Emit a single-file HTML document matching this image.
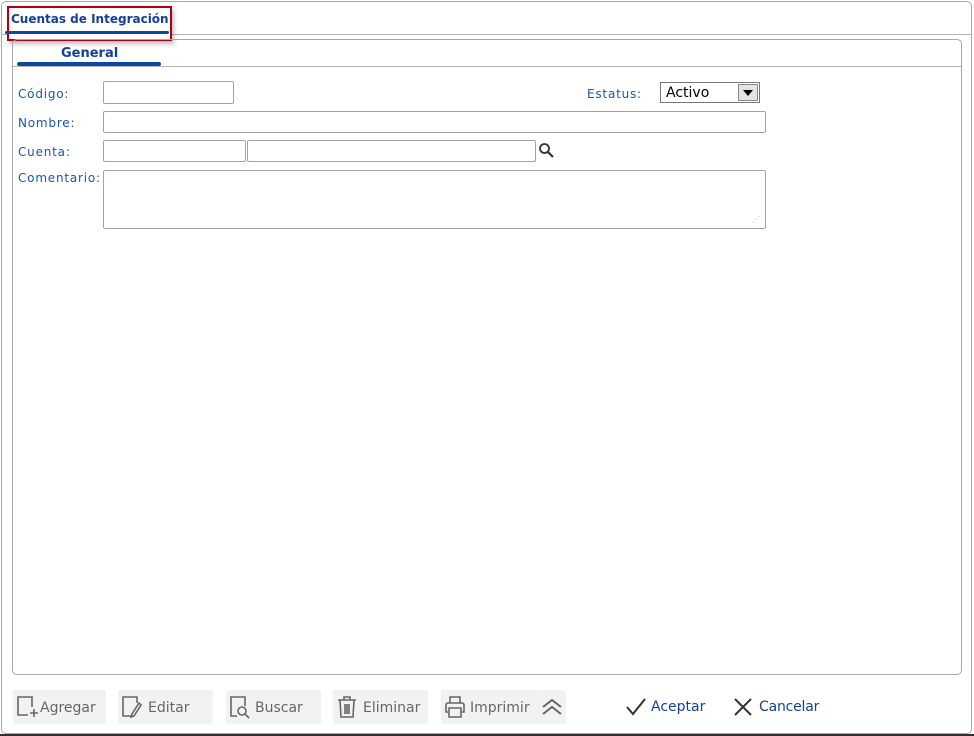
<!DOCTYPE html>
<html><head><meta charset="utf-8"><style>
*{box-sizing:border-box}
body{margin:0;width:974px;height:736px;background:#fff;font-family:"DejaVu Sans","Liberation Sans",sans-serif;position:relative;overflow:hidden}
.abs{position:absolute}
.frame{left:1px;top:1px;width:971px;height:733px;border:1px solid #a8a8a8;border-radius:5px}
.lbl{color:#1a56b0;font-size:12px;letter-spacing:0.8px}
.in{position:absolute;border:1px solid #a3a3a3;border-radius:2px;background:#fff}
.btn{position:absolute;top:690px;height:34px;background:#f2f2f2;border-radius:2px;color:#666;font-size:14px;line-height:36px}
.btn svg{position:absolute;left:2px;top:4px}
.btn span{position:absolute;left:27px}
</style></head><body>
<div class="abs frame"></div>
<div class="abs" style="left:2px;top:34px;width:969px;height:1px;background:#b5b5b5"></div>
<div class="abs" style="left:7px;top:6px;width:165px;height:35px;border:2px solid #b00010;box-shadow:2px 3px 4px rgba(0,0,0,.25);background:#fff"></div>
<div class="abs" style="left:11px;top:12px;font-size:12px;font-weight:bold;color:#15409a">Cuentas de Integración</div>
<div class="abs" style="left:5px;top:31px;width:164px;height:3px;background:#0d47a1;border-radius:2px"></div>
<div class="abs" style="left:12px;top:39px;width:950px;height:636px;border:1px solid #a8a8a8;border-radius:5px"></div>
<div class="abs" style="left:13px;top:66px;width:948px;height:1px;background:#b5b5b5"></div>
<div class="abs" style="left:61px;top:46px;font-size:13px;font-weight:bold;color:#15409a">General</div>
<div class="abs" style="left:17px;top:62px;width:144px;height:4px;background:#0d47a1;border-radius:2px"></div>

<div class="abs lbl" style="left:18px;top:87px">Código:</div>
<div class="in" style="left:103px;top:81px;width:131px;height:23px"></div>
<div class="abs lbl" style="left:587px;top:87px">Estatus:</div>
<div class="in" style="left:660px;top:82px;width:100px;height:21px;border-color:#777;border-radius:0"></div>
<div class="abs" style="left:666px;top:85px;font-size:14px;color:#000">Activo</div>
<div class="abs" style="left:738px;top:84px;width:20px;height:17px;background:#e4e4e4;border:1px solid #888"></div>
<div class="abs" style="left:743px;top:90px;width:0;height:0;border-left:5px solid transparent;border-right:5px solid transparent;border-top:6px solid #000"></div>

<div class="abs lbl" style="left:18px;top:116px">Nombre:</div>
<div class="in" style="left:103px;top:111px;width:663px;height:22px"></div>
<div class="abs lbl" style="left:18px;top:145px">Cuenta:</div>
<div class="in" style="left:103px;top:140px;width:143px;height:22px"></div>
<div class="in" style="left:247px;top:140px;width:289px;height:22px"></div>
<svg class="abs" style="left:538px;top:142px" width="18" height="18" viewBox="0 0 18 18"><circle cx="6.5" cy="6.5" r="4.5" fill="none" stroke="#333" stroke-width="1.8"/><path d="M10 10l5 5" stroke="#333" stroke-width="2.2"/></svg>
<div class="abs lbl" style="left:18px;top:171px">Comentario:</div>
<div class="in" style="left:103px;top:170px;width:663px;height:59px"></div>
<div class="abs" style="left:752px;top:215px;color:#aaa;font-size:8px">⋰</div>

<div class="btn" style="left:13px;width:93px"><svg width="26" height="26" viewBox="0 0 26 26" fill="none" stroke="#666" stroke-width="1.6"><path d="M13 21H3V3h14v10"/><path d="M19 15v8M15 19h8"/></svg><span>Agregar</span></div>
<div class="btn" style="left:118px;width:95px"><svg width="26" height="26" viewBox="0 0 26 26" fill="none" stroke="#666" stroke-width="1.6"><path d="M13 22H3V3h14v6"/><path d="M19 9l-7 11-1 3 3-1 7-11z"/></svg><span style="left:30px">Editar</span></div>
<div class="btn" style="left:226px;width:95px"><svg width="26" height="26" viewBox="0 0 26 26" fill="none" stroke="#666" stroke-width="1.6"><path d="M9 22H3V3h14v9"/><circle cx="14" cy="17" r="4"/><path d="M17 20l4 4"/></svg><span style="left:29px">Buscar</span></div>
<div class="btn" style="left:333px;width:95px"><svg width="26" height="26" viewBox="0 0 26 26" fill="none" stroke="#666" stroke-width="1.6"><path d="M3 6h18M9 6V3h6v3M5 6l1 17h12l1-17M10 10v10M12 10v10M14 10v10"/></svg><span style="left:30px">Eliminar</span></div>
<div class="btn" style="left:441px;width:96px"><svg width="26" height="26" viewBox="0 0 26 26" fill="none" stroke="#666" stroke-width="1.6"><path d="M7 9V3h10v6M5 9h14a2 2 0 012 2v7h-2M5 18H3v-7a2 2 0 012-2M6 14h12v9H6z"/></svg><span style="left:29px">Imprimir</span></div>
<div class="btn" style="left:537px;width:29px"><svg width="26" height="26" viewBox="0 0 26 26" fill="none" stroke="#666" stroke-width="2"><path d="M4 13l9-7 9 7M4 20l9-7 9 7"/></svg></div>

<svg class="abs" style="left:625px;top:697px" width="22" height="20" viewBox="0 0 22 20"><path d="M2 10l6 7L20 2" fill="none" stroke="#333" stroke-width="2"/></svg>
<div class="abs" style="left:651px;top:699px;font-size:14px;color:#15409a">Aceptar</div>
<svg class="abs" style="left:733px;top:697px" width="20" height="20" viewBox="0 0 20 20"><path d="M2 2l16 16M18 2L2 18" stroke="#333" stroke-width="2"/></svg>
<div class="abs" style="left:759px;top:699px;font-size:14px;color:#15409a;letter-spacing:-0.2px">Cancelar</div>
<div class="abs" style="left:0;top:734px;width:974px;height:2px;background:#3a2a30"></div>
</body></html>
